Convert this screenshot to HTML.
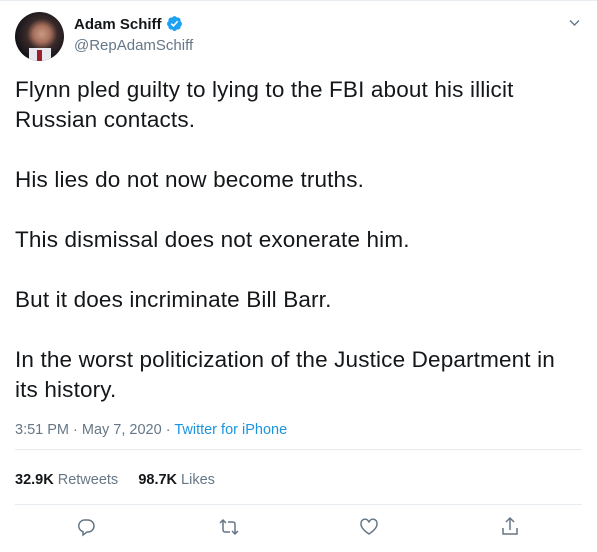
<!DOCTYPE html>
<html><head><style>
body{margin:0;width:597px;height:552px;background:#fff;font-family:"Liberation Sans",Arial,sans-serif;position:relative;overflow:hidden;color:#14171a}
.a{position:absolute}
.sep{position:absolute;left:15px;right:15px;height:1px;background:#e6ecf0}
</style></head><body>
<div class="a" style="left:0;top:0;width:597px;height:1px;background:#e6ecf0"></div>
<div class="a" style="left:15px;top:12px;width:49px;height:49px;border-radius:50%;background:radial-gradient(circle at 55% 45%,#c89a84 0,#a8705c 22%,#3a2a2a 40%,#141418 70%);overflow:hidden">
<div class="a" style="left:14px;top:36px;width:22px;height:14px;background:#e8e8ee"></div>
<div class="a" style="left:22px;top:38px;width:5px;height:12px;background:#9a1f2a"></div>
</div>
<div class="a" style="left:74px;top:15px;font-weight:bold;font-size:15px">Adam Schiff
<svg width="17" height="17" viewBox="0 0 24 24" style="vertical-align:-3px"><path fill="#1da1f2" d="M22.5 12.5c0-1.58-.88-2.95-2.16-3.6.15-.44.23-.91.23-1.4 0-2.2-1.7-3.98-3.8-3.98-.47 0-.92.08-1.33.25C14.82 2.5 13.5 1.5 12 1.5s-2.82 1-3.44 2.27c-.41-.17-.86-.25-1.33-.25-2.1 0-3.8 1.78-3.8 3.98 0 .49.08.96.23 1.4C2.38 9.55 1.5 10.92 1.5 12.5c0 1.5.8 2.8 1.97 3.48-.02.17-.03.34-.03.52 0 2.2 1.7 3.98 3.8 3.980.47 0 .92-.09 1.33-.25.62 1.27 1.93 2.27 3.43 2.27s2.81-1 3.43-2.27c.41.16.86.25 1.33.25 2.1 0 3.8-1.78 3.8-3.98 0-.18-.01-.35-.03-.52 1.17-.68 1.97-1.98 1.97-3.48z"/><path fill="none" stroke="#fff" stroke-width="2.2" d="M7.5 12.3l3 3 6-6.5"/></svg></div>
<div class="a" style="left:74px;top:37px;font-size:15px;color:#657786">@RepAdamSchiff</div>
<svg class="a" style="left:568px;top:16px" width="13" height="13" viewBox="0 0 13 13"><path d="M2 4.5l4.5 4.5 4.5-4.5" fill="none" stroke="#657786" stroke-width="1.4"/></svg>
<div class="a" style="left:15px;top:75px;font-size:22.5px;letter-spacing:0.15px;line-height:30px;width:580px;white-space:nowrap">Flynn pled guilty to lying to the FBI about his illicit<br>Russian contacts.<br><br>His lies do not now become truths.<br><br>This dismissal does not exonerate him.<br><br>But it does incriminate Bill Barr.<br><br>In the worst politicization of the Justice Department in<br>its history.</div>
<div class="a" style="left:15px;top:422px;font-size:14.5px;color:#657786">3:51 PM · May 7, 2020 · <span style="color:#1b95e0">Twitter for iPhone</span></div>
<div class="sep" style="top:449px"></div>
<div class="a" style="left:15px;top:472px;font-size:14.5px;color:#657786"><b style="color:#14171a">32.9K</b> Retweets &nbsp;&nbsp;&nbsp;&nbsp;<b style="color:#14171a">98.7K</b> Likes</div>
<div class="sep" style="top:504px"></div>
<svg class="a" style="left:76px;top:517px" width="20" height="20" viewBox="0 0 20 20" fill="none" stroke="#657786" stroke-width="1.5"><path d="M8 3h4a6 6 0 0 1 0 12h-1l-4 3v-3.3A6 6 0 0 1 8 3z"/></svg>
<svg class="a" style="left:218px;top:517px" width="22" height="20" viewBox="0 0 22 20" fill="none" stroke="#657786" stroke-width="1.5"><path d="M2 6l3-3 3 3M5 3v10a2 2 0 0 0 2 2h5M20 14l-3 3-3-3M17 17V7a2 2 0 0 0-2-2h-5"/></svg>
<svg class="a" style="left:359px;top:517px" width="20" height="20" viewBox="0 0 20 20" fill="none" stroke="#657786" stroke-width="1.5"><path d="M10 17C4 13 2 10 2 7a4 4 0 0 1 8-1.5A4 4 0 0 1 18 7c0 3-2 6-8 10z"/></svg>
<svg class="a" style="left:500px;top:516px" width="20" height="20" viewBox="0 0 20 20" fill="none" stroke="#657786" stroke-width="1.5"><path d="M10 2v12M6 6l4-4 4 4M3 12v6h14v-6"/></svg>
</body></html>
